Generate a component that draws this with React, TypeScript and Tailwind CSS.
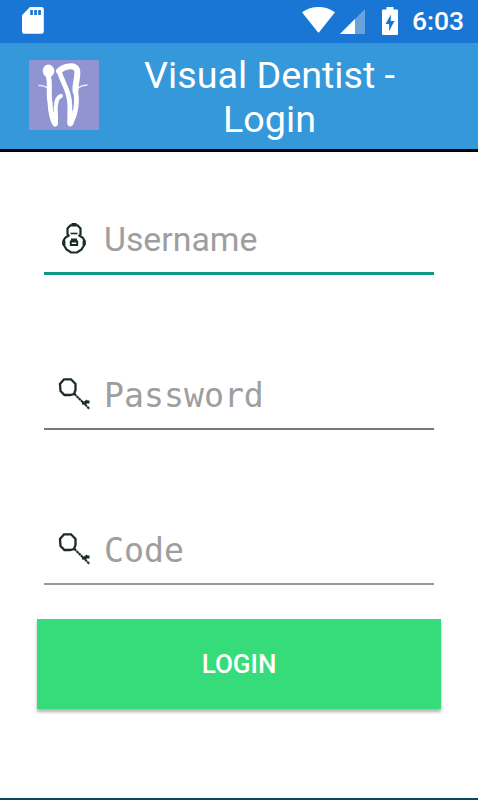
import type { ReactNode } from "react";

function SdCard() {
  return (
    <svg className="h-[27px] w-[22px]" viewBox="0 0 22 27">
      <path fill="#fff" fillRule="evenodd" d="M8 0h11.500q2.300 0 2.300 2.300V24.500q0 2.300-2.300 2.300H2.300Q0 26.800 0 24.500V8.300ZM8.200 3v5h2.700V3Zm4 0v5h2.700V3Zm4 0v5h2.700V3Z" />
    </svg>
  );
}

function Wifi() {
  return (
    <svg className="h-[26px] w-[33px]" viewBox="0 0 33 26">
      <path fill="#fff" d="M0 5.200Q7.500 0 16.500 0T33 5.200L17.300 25q-.8 1-1.600 0Z" />
    </svg>
  );
}

function Signal() {
  return (
    <svg className="h-[25px] w-[25px]" viewBox="0 0 25 25">
      <path fill="#66a3df" d="M25 0V25H0Z" />
      <path fill="#fff" d="M15 10V25H0Z" />
    </svg>
  );
}

function Battery() {
  return (
    <svg className="h-[28px] w-[16px]" viewBox="0 0 16 28">
      <path fill="#fff" fillRule="evenodd" d="M4.500 0h7v2.600H15q1 0 1 1V27q0 1-1 1H1q-1 0-1-1V3.600q0-1 1-1h3.500ZM8.800 7.500 3.500 17h3.600v7L12.500 14H8.800Z" />
    </svg>
  );
}

function Logo() {
  return (
    <svg className="h-[70px] w-[70px] shrink-0" viewBox="0 0 70 70">
      <defs>
        <filter id="soften"><feGaussianBlur stdDeviation="0.7" /></filter>
      </defs>
      <rect width="70" height="70" fill="#9095d1" />
      <g fill="none" stroke="#fff" strokeLinecap="round" strokeLinejoin="round" filter="url(#soften)">
        <ellipse cx="19.500" cy="11" rx="5.800" ry="6.500" fill="#fff" stroke="none" />
        <path strokeWidth="5" d="M19 15C22 24 19 33 21 42C21.500 52 23 60 26 64" />
        <path strokeWidth="4" d="M26.500 64C28 60 26 51 27 45C27.500 40 29 37 32 36" />
        <path strokeWidth="6" d="M30 11C35 6 46 4 48 10C49.500 16 46 22 46.500 31" />
        <path strokeWidth="4.800" d="M46.500 31C49 42 46.500 56 41 64C40 60 42 48 40 38C38 27 33 21 30 11" />
        <path strokeWidth="6" d="M26 62L25 55M41.500 63L43.500 54" />
        <path strokeWidth="1.500" opacity="0.8" d="M10 25.500Q14 25 19 28M49 28Q53 25 58 25" />
      </g>
    </svg>
  );
}

function LockIcon() {
  return (
    <svg className="h-[33px] w-[34px]" viewBox="0 0 34 33" fill="none" stroke="#1b2b29">
      <path strokeWidth="2.200" d="M9.500 13V6.500L12.500 3.300H19.500L22.500 6.500V13" />
      <path strokeWidth="1.600" d="M12.500 11.500H19.500" />
      <path strokeWidth="3" d="M13.500 2.500H18.500" />
      <path strokeWidth="2.200" d="M11.500 13L7.500 15.500L5.800 18V23L8.500 27.500L13 30.500H19L23.500 27.500L26.200 23V18L24.500 15.500L20.500 13" />
      <path strokeWidth="3.200" d="M5.800 18.500V23M26.200 18.500V23" />
      <path strokeWidth="2" d="M12.800 23V19.500H19.200V23M11.800 23H20.200M14 19V17.500H18V19" />
    </svg>
  );
}

function KeyIcon() {
  return (
    <svg className="h-[33px] w-[34px]" viewBox="0 0 34 33" fill="none" stroke="#1b2b29">
      <path strokeWidth="2.300" d="M6 2.300H13L17.500 7V13L16 17L12 18H6.500L2.500 14L2 7Z" />
      <path strokeWidth="2.100" strokeDasharray="2.500 .5" d="M16.500 17L31.500 32" />
      <path strokeWidth="2.800" d="M24 26H28.500M27 25.500L29.500 23.500M28 25H31.500" />
    </svg>
  );
}

function Field({ icon, line, children }: { icon: ReactNode; line: string; children: ReactNode }) {
  return (
    <div className={`flex h-[56px] items-start pl-[14px] ${line}`}>
      <div className="shrink-0 pt-[3px]">{icon}</div>
      <div className="ml-[12px] h-[42px]">{children}</div>
    </div>
  );
}

export default function App() {
  return (
    <div className="flex h-[800px] w-[478px] flex-col overflow-hidden bg-white font-[Roboto,sans-serif]">
      <div className="flex h-[43px] shrink-0 items-start bg-[#1976d4] pl-[22px] text-white">
        <div className="pt-[7px]"><SdCard /></div>
        <div className="ml-[258px] pt-[7px]"><Wifi /></div>
        <div className="ml-[5px] pt-[9px]"><Signal /></div>
        <div className="ml-[17px] pt-[7px]"><Battery /></div>
        <span className="ml-[14px] pt-[5px] text-[26.500px] font-medium leading-[32px]">6:03</span>
      </div>
      <header className="flex h-[109px] shrink-0 items-start border-b-[3px] border-black bg-[#3498db] pl-[29px] pt-[10px] text-white">
        <div className="pt-[7px]"><Logo /></div>
        <h1 className="ml-[30px] w-[281px] text-center text-[37.700px] font-normal leading-[44px]">Visual Dentist - Login</h1>
      </header>
      <main className="flex grow flex-col px-[44px] pt-[67px] text-[#9e9e9e]">
        <Field icon={<LockIcon />} line="border-b-[3px] border-[#109887]">
          <span className="block pt-px text-[33.800px] leading-[40px]">Username</span>
        </Field>
        <div className="mt-[99px]">
          <Field icon={<KeyIcon />} line="border-b-2 border-[#777]">
            <span className="block pt-[2px] font-['DejaVu_Sans_Mono',monospace] text-[33.200px] leading-[40px]">Password</span>
          </Field>
        </div>
        <div className="mt-[99px]">
          <Field icon={<KeyIcon />} line="border-b-2 border-[#999]">
            <span className="block pt-[2px] font-['DejaVu_Sans_Mono',monospace] text-[33.200px] leading-[40px]">Code</span>
          </Field>
        </div>
        <button className="-mx-[7px] mt-[34px] h-[90px] bg-[#36dc79] text-[26px] font-medium text-white shadow-[0_3px_3px_rgba(0,0,0,.3)]">LOGIN</button>
      </main>
      <div className="h-[2px] shrink-0 bg-[#074b58]" />
    </div>
  );
}
